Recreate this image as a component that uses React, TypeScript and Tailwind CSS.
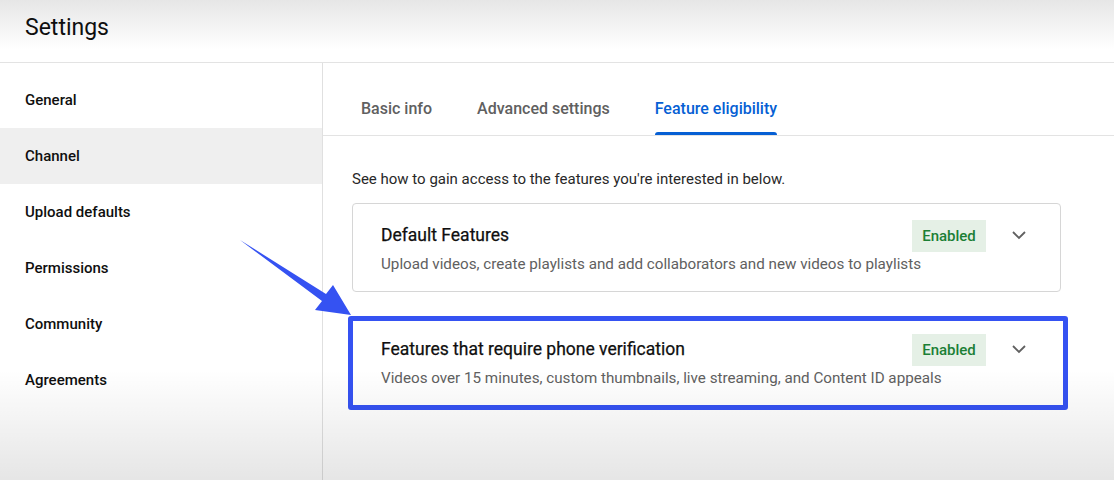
import React from 'react';

const navItems = ['General', 'Channel', 'Upload defaults', 'Permissions', 'Community', 'Agreements'];
const tabs = ['Basic info', 'Advanced settings', 'Feature eligibility'];

const Chevron = () => (
  <svg width="24" height="24" viewBox="0 0 24 24" className="text-[#606060]">
    <polyline points="6,9 12,15 18,9" fill="none" stroke="currentColor" strokeWidth="1.8" />
  </svg>
);

const Badge = () => (
  <div className="w-[74px] h-[32px] flex items-center justify-center bg-[#e5f0e6] text-[#1b7f35] text-[15px] font-medium">
    Enabled
  </div>
);

const CardBody = ({ title, desc }: { title: string; desc: string }) => (
  <>
    <div className="flex items-center h-[32px]">
      <div className="flex-1 -mt-[3px] text-[17.5px] text-[#0f0f0f] leading-[20px] [-webkit-text-stroke:0.25px_#0f0f0f]">{title}</div>
      <Badge />
      <div className="ml-[21px] -mt-[2px] flex items-center"><Chevron /></div>
    </div>
    <div className="mt-[2px] text-[15.2px] text-[#606060] leading-[20px] whitespace-nowrap">{desc}</div>
  </>
);

const App: React.FC = () => {
  const active = 'Channel';
  const activeTab = 'Feature eligibility';

  return (
    <div className="relative w-[1114px] h-[480px] overflow-hidden bg-white flex flex-col font-['Roboto',sans-serif]">
      {/* header */}
      <div className="h-[63px] shrink-0 border-b border-[#e3e3e3] bg-linear-to-b from-[#e6e6e6] to-white to-80% flex items-center px-[25px]">
        <h1 className="text-[23px] text-[#0f0f0f] leading-none -mt-[8px]">Settings</h1>
      </div>

      <div className="flex flex-1">
        {/* sidebar */}
        <div className="w-[323px] shrink-0 border-r border-[#e0e0e0] pt-[9px]">
          {navItems.map(item => (
            <div
              key={item}
              className={`h-[56px] flex items-center px-[25px] text-[15px] font-medium text-[#0f0f0f] ${item === active ? 'bg-[#efefef]' : ''}`}
            >
              {item}
            </div>
          ))}
        </div>

        {/* main */}
        <div className="w-[791px] flex flex-col">
          <div className="h-[73px] border-b border-[#e3e3e3] flex items-end gap-[45px] pl-[38px]">
            {tabs.map(tab => (
              <div key={tab} className="flex flex-col items-stretch">
                <div className={`text-[16px] font-medium leading-none pb-[15px] ${tab === activeTab ? 'text-[#065fd4]' : 'text-[#606060]'}`}>
                  {tab}
                </div>
                <div className={`h-[3px] rounded-t-sm ${tab === activeTab ? 'bg-[#065fd4]' : 'bg-transparent'}`} />
              </div>
            ))}
          </div>

          <div className="pl-[29px]">
            <p className="mt-[34px] text-[15px] text-[#282828] leading-[18px]">
              See how to gain access to the features you're interested in below.
            </p>

            <div className="mt-[15px] w-[709px] h-[89px] border border-[#d6d6d6] rounded-[4px] pl-[28px] pr-[29px] pt-[16px]">
              <CardBody
                title="Default Features"
                desc="Upload videos, create playlists and add collaborators and new videos to playlists"
              />
            </div>

            <div className="mt-[24px] -ml-[4px] w-[720px] h-[94px] border-[5px] border-[#3552f2] rounded-[3px] pl-[28px] pr-[32px] pt-[13px]">
              <CardBody
                title="Features that require phone verification"
                desc="Videos over 15 minutes, custom thumbnails, live streaming, and Content ID appeals"
              />
            </div>
          </div>
        </div>
      </div>

      {/* annotation arrow */}
      <svg className="absolute left-0 top-0 pointer-events-none" width="1114" height="480">
        <polygon points="240,240 326,294 333,285 351,315 315,310 322,301" fill="#3552f2" />
      </svg>

      {/* video vignette at bottom */}
      <div className="absolute left-0 right-0 bottom-0 h-[110px] bg-linear-to-b from-transparent to-black/10 pointer-events-none" />
    </div>
  );
};

export default App;
